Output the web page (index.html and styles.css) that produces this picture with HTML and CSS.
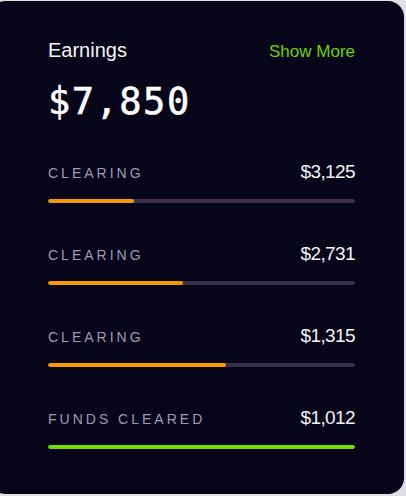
FILE: index.html
```html
<!DOCTYPE html>
<html lang="en">
<head>
    <meta charset="UTF-8">
    <meta name="viewport" content="width=device-width, initial-scale=1.0">
    <title>Earnings</title>
    <link rel="stylesheet" href="styles.css">
</head>
<body>

    <div class="earnings-card">
        <div class="card-header">
            <h2>Earnings</h2>
            <a href="#" class="show-more">Show More</a>
        </div>
        <div class="total">$7,850</div>

        <div class="payout">
            <div class="payout-info">
                <span class="payout-label">Clearing</span>
                <span class="payout-amount">$3,125</span>
            </div>
            <div class="bar"><div class="bar-fill" style="width: 28%"></div></div>
        </div>

        <div class="payout">
            <div class="payout-info">
                <span class="payout-label">Clearing</span>
                <span class="payout-amount">$2,731</span>
            </div>
            <div class="bar"><div class="bar-fill" style="width: 44%"></div></div>
        </div>

        <div class="payout">
            <div class="payout-info">
                <span class="payout-label">Clearing</span>
                <span class="payout-amount">$1,315</span>
            </div>
            <div class="bar"><div class="bar-fill" style="width: 58%"></div></div>
        </div>

        <div class="payout">
            <div class="payout-info">
                <span class="payout-label">Funds Cleared</span>
                <span class="payout-amount">$1,012</span>
            </div>
            <div class="bar"><div class="bar-fill cleared" style="width: 100%"></div></div>
        </div>
    </div>

</body>
</html>
```

FILE: styles.css
```css
body {
    font-family: 'Liberation Sans', Arial, sans-serif;
    background: #dfe0e3;
    margin: 0;
    padding: 0;
    overflow: hidden;
}

.earnings-card {
    background: #06051a;
    border-radius: 16px;
    width: 414px;
    height: 493px;
    margin: 1px 0 0 -10px;
    padding: 37px 49px 0 58px;
    box-sizing: border-box;
    color: #fff;
}

.card-header {
    display: flex;
    justify-content: space-between;
    align-items: baseline;
}

.card-header h2 {
    margin: 0;
    font-size: 20px;
    font-weight: 400;
    line-height: 24px;
    color: #f4f4f6;
}

.show-more {
    font-size: 17px;
    color: #6bd400;
    text-decoration: none;
}

.total {
    margin-top: 20px;
    font-family: 'DejaVu Sans Mono', monospace;
    font-size: 37px;
    line-height: 40px;
    letter-spacing: 1.5px;
    color: #fff;
    -webkit-text-stroke: 0.6px #fff;
}

.payout {
    margin-top: 39px;
}

.payout + .payout {
    margin-top: 40px;
}

.payout-info {
    display: flex;
    justify-content: space-between;
    align-items: baseline;
}

.payout-label {
    font-size: 14px;
    text-transform: uppercase;
    letter-spacing: 3px;
    color: #a19bb0;
}

.payout-amount {
    font-size: 19px;
    letter-spacing: -0.6px;
    color: #f4f4f6;
}

.bar {
    margin-top: 16px;
    height: 4px;
    border-radius: 2px;
    background: #3a2f4d;
    overflow: hidden;
}

.bar-fill {
    height: 100%;
    border-radius: 2px;
    background: #f59a00;
}

.bar-fill.cleared {
    background: #6fe000;
}
```
